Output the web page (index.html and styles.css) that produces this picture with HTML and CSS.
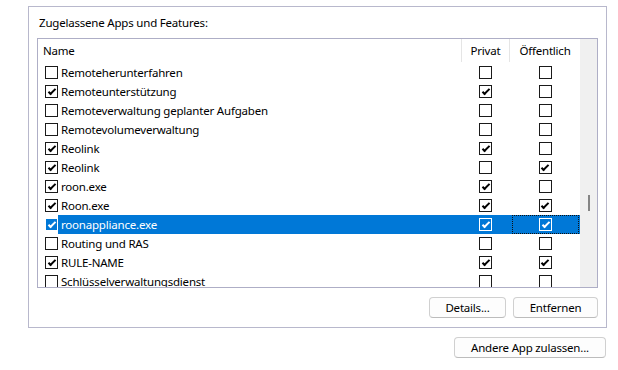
FILE: index.html
```html
<!DOCTYPE html>
<html lang="de">
<head>
  <meta charset="UTF-8">
  <title>Zugelassene Apps</title>
  <link rel="stylesheet" href="styles.css">
</head>
<body>
  <div class="panel">
    <div class="panel-title">Zugelassene Apps und Features:</div>

    <!-- Liste der Regeln -->
    <div class="list">
      <div class="table">
        <div class="head name-head">Name</div>
        <div class="head">Privat</div>
        <div class="head">Öffentlich</div>

        <div class="name"><span class="cb"></span><span class="label">Remoteherunterfahren</span></div>
        <div class="cell"><span class="cb"></span></div>
        <div class="cell"><span class="cb"></span></div>

        <div class="name"><span class="cb on"></span><span class="label">Remoteunterstützung</span></div>
        <div class="cell"><span class="cb on"></span></div>
        <div class="cell"><span class="cb"></span></div>

        <div class="name"><span class="cb"></span><span class="label">Remoteverwaltung geplanter Aufgaben</span></div>
        <div class="cell"><span class="cb"></span></div>
        <div class="cell"><span class="cb"></span></div>

        <div class="name"><span class="cb"></span><span class="label">Remotevolumeverwaltung</span></div>
        <div class="cell"><span class="cb"></span></div>
        <div class="cell"><span class="cb"></span></div>

        <div class="name"><span class="cb on"></span><span class="label">Reolink</span></div>
        <div class="cell"><span class="cb on"></span></div>
        <div class="cell"><span class="cb"></span></div>

        <div class="name"><span class="cb on"></span><span class="label">Reolink</span></div>
        <div class="cell"><span class="cb"></span></div>
        <div class="cell"><span class="cb on"></span></div>

        <div class="name"><span class="cb on"></span><span class="label">roon.exe</span></div>
        <div class="cell"><span class="cb on"></span></div>
        <div class="cell"><span class="cb"></span></div>

        <div class="name"><span class="cb on"></span><span class="label">Roon.exe</span></div>
        <div class="cell"><span class="cb on"></span></div>
        <div class="cell"><span class="cb on"></span></div>

        <div class="name selected"><span class="cb on"></span><span class="label">roonappliance.exe</span></div>
        <div class="cell selected"><span class="cb on"></span></div>
        <div class="cell selected focus"><span class="focus-box"><span class="cb on"></span></span></div>

        <div class="name"><span class="cb"></span><span class="label">Routing und RAS</span></div>
        <div class="cell"><span class="cb"></span></div>
        <div class="cell"><span class="cb"></span></div>

        <div class="name"><span class="cb on"></span><span class="label">RULE-NAME</span></div>
        <div class="cell"><span class="cb on"></span></div>
        <div class="cell"><span class="cb on"></span></div>

        <div class="name"><span class="cb"></span><span class="label">Schlüsselverwaltungsdienst</span></div>
        <div class="cell"><span class="cb"></span></div>
        <div class="cell"><span class="cb"></span></div>
      </div>
      <div class="scrollbar"><div class="thumb"></div></div>
    </div>

    <div class="panel-buttons">
      <button class="btn btn-details">Details...</button>
      <button class="btn btn-remove">Entfernen</button>
    </div>
  </div>

  <div class="page-buttons">
    <button class="btn btn-other">Andere App zulassen...</button>
  </div>
</body>
</html>
```

FILE: styles.css
```css
/* Grundlayout */
body {
  margin: 0;
  background: #ffffff;
  font-family: 'Noto Sans', 'Liberation Sans', sans-serif;
  font-size: 11.5px;
  letter-spacing: -0.2px;
  color: #000000;
}

/* Rahmen um die Liste */
.panel {
  margin: 6px 11px 0 28px;
  border: 1px solid #b8b8cc;
  padding: 8px 8px 9px 8px;
}

.panel-title {
  height: 16px;
  line-height: 16px;
  margin-bottom: 7px;
  padding-left: 2px;
}

/* Liste */
.list {
  display: flex;
  height: 248px;
  border: 1px solid #aeaec6;
  overflow: hidden;
}

.table {
  flex: 1;
  display: grid;
  grid-template-columns: 1fr 48px 71px;
  grid-auto-rows: 19px;
  grid-template-rows: 24px;
  align-content: start;
  overflow: hidden;
}

.head {
  display: flex;
  align-items: center;
  justify-content: center;
  border-left: 1px solid #e5e5e5;
  height: 23px;
}

.name-head {
  justify-content: flex-start;
  padding-left: 5px;
  border-left: none;
}

.name {
  display: flex;
  align-items: center;
  padding-left: 7px;
  white-space: nowrap;
}

.label {
  flex: 1;
  height: 19px;
  line-height: 19px;
  padding-left: 3px;
}

.cell {
  display: flex;
  align-items: center;
  justify-content: center;
  padding-left: 1px;
}

/* Kontrollkästchen */
.cb {
  display: flex;
  align-items: center;
  justify-content: center;
  flex-shrink: 0;
  width: 11px;
  height: 11px;
  border: 1px solid #1a1a1a;
  background: #ffffff;
}

.cb.on::after {
  content: "";
  width: 2px;
  height: 6px;
  margin-top: -2px;
  border: solid #000000;
  border-width: 0 2px 2px 0;
  transform: rotate(45deg);
}

/* Ausgewählte Zeile */
.selected .label,
.cell.selected {
  background: #0078d7;
  color: #ffffff;
}

.selected .cb {
  border-color: #ffffff;
  background: #0078d7;
}

.selected .cb.on::after {
  border-color: #ffffff;
}

.cell.focus {
  padding: 0 1px 0 3px;
}

.focus-box {
  flex: 1;
  align-self: stretch;
  display: flex;
  align-items: center;
  justify-content: center;
  border: 1px dotted #101010;
}

/* Bildlaufleiste */
.scrollbar {
  width: 17px;
  background: #f0f0f0;
}

.thumb {
  width: 2px;
  height: 16px;
  margin: 156px 0 0 8px;
  background: #858585;
}

/* Schaltflächen */
.panel-buttons {
  display: flex;
  justify-content: flex-end;
  gap: 7px;
  margin-top: 9px;
}

.page-buttons {
  display: flex;
  justify-content: flex-end;
  margin: 9px 12px 0 0;
}

.btn {
  height: 21px;
  padding: 0;
  font-family: inherit;
  font-size: 11.5px;
  letter-spacing: -0.2px;
  color: #000000;
  background: #fdfdfd;
  border: 1px solid #d0d0d0;
  border-bottom-color: #bcbcbc;
  border-radius: 4px;
}

.btn-details {
  width: 77px;
}

.btn-remove {
  width: 85px;
}

.btn-other {
  width: 152px;
}
```
